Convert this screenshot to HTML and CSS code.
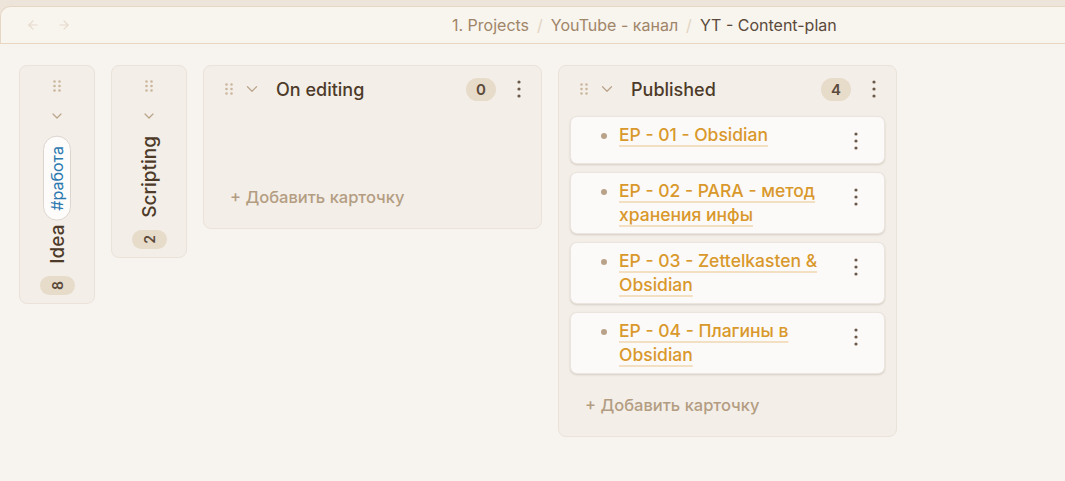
FILE: index.html
```html
<!DOCTYPE html>
<html lang="ru">
<head>
<meta charset="utf-8">
<title>YT - Content-plan</title>
<link rel="stylesheet" href="styles.css">
</head>
<body>
<div class="topstrip"></div>
<header class="viewheader">
  <div class="nav">
    <svg class="navbtn" width="14" height="14" viewBox="0 0 24 24" fill="none" stroke="currentColor" stroke-width="2" stroke-linecap="round" stroke-linejoin="round"><path d="M19 12H5"/><path d="M12 19l-7-7 7-7"/></svg>
    <svg class="navbtn" width="14" height="14" viewBox="0 0 24 24" fill="none" stroke="currentColor" stroke-width="2" stroke-linecap="round" stroke-linejoin="round"><path d="M5 12h14"/><path d="M12 5l7 7-7 7"/></svg>
  </div>
  <div class="crumbs">
    <span class="crumb">1. Projects</span><span class="sep">/</span><span class="crumb">YouTube - канал</span><span class="sep">/</span><span class="crumb current">YT - Content-plan</span>
  </div>
</header>

<main class="board">
  <section class="lane collapsed lane-idea">
    <svg class="handle" width="8" height="12" viewBox="0 0 8 12"><g fill="currentColor"><circle cx="1.5" cy="1.5" r="1.3"/><circle cx="6.5" cy="1.5" r="1.3"/><circle cx="1.5" cy="6" r="1.3"/><circle cx="6.5" cy="6" r="1.3"/><circle cx="1.5" cy="10.5" r="1.3"/><circle cx="6.5" cy="10.5" r="1.3"/></g></svg>
    <svg class="chev" width="16" height="16" viewBox="0 0 24 24" fill="none" stroke="currentColor" stroke-width="1.8" stroke-linecap="round" stroke-linejoin="round"><path d="M6 9l6 6 6-6"/></svg>
    <div class="vtitle"><span class="vlabel">Idea</span><span class="tag">#работа</span></div>
    <div class="vcount"><span>8</span></div>
  </section>

  <section class="lane collapsed">
    <svg class="handle" width="8" height="12" viewBox="0 0 8 12"><g fill="currentColor"><circle cx="1.5" cy="1.5" r="1.3"/><circle cx="6.5" cy="1.5" r="1.3"/><circle cx="1.5" cy="6" r="1.3"/><circle cx="6.5" cy="6" r="1.3"/><circle cx="1.5" cy="10.5" r="1.3"/><circle cx="6.5" cy="10.5" r="1.3"/></g></svg>
    <svg class="chev" width="16" height="16" viewBox="0 0 24 24" fill="none" stroke="currentColor" stroke-width="1.8" stroke-linecap="round" stroke-linejoin="round"><path d="M6 9l6 6 6-6"/></svg>
    <div class="vtitle"><span class="vlabel">Scripting</span></div>
    <div class="vcount"><span>2</span></div>
  </section>

  <section class="lane expanded">
    <div class="lane-head">
      <svg class="handle" width="8" height="12" viewBox="0 0 8 12"><g fill="currentColor"><circle cx="1.5" cy="1.5" r="1.3"/><circle cx="6.5" cy="1.5" r="1.3"/><circle cx="1.5" cy="6" r="1.3"/><circle cx="6.5" cy="6" r="1.3"/><circle cx="1.5" cy="10.5" r="1.3"/><circle cx="6.5" cy="10.5" r="1.3"/></g></svg>
      <svg class="chev" width="18" height="18" viewBox="0 0 24 24" fill="none" stroke="currentColor" stroke-width="1.6" stroke-linecap="round" stroke-linejoin="round"><path d="M6 9l6 6 6-6"/></svg>
      <h2 class="lane-title">On editing</h2>
      <span class="count">0</span>
      <svg class="more" width="4" height="18" viewBox="0 0 4 18"><g fill="currentColor"><circle cx="2" cy="2" r="1.6"/><circle cx="2" cy="9" r="1.6"/><circle cx="2" cy="16" r="1.6"/></g></svg>
    </div>
    <div class="items empty"></div>
    <button class="add">+ Добавить карточку</button>
  </section>

  <section class="lane expanded">
    <div class="lane-head">
      <svg class="handle" width="8" height="12" viewBox="0 0 8 12"><g fill="currentColor"><circle cx="1.5" cy="1.5" r="1.3"/><circle cx="6.5" cy="1.5" r="1.3"/><circle cx="1.5" cy="6" r="1.3"/><circle cx="6.5" cy="6" r="1.3"/><circle cx="1.5" cy="10.5" r="1.3"/><circle cx="6.5" cy="10.5" r="1.3"/></g></svg>
      <svg class="chev" width="18" height="18" viewBox="0 0 24 24" fill="none" stroke="currentColor" stroke-width="1.6" stroke-linecap="round" stroke-linejoin="round"><path d="M6 9l6 6 6-6"/></svg>
      <h2 class="lane-title">Published</h2>
      <span class="count">4</span>
      <svg class="more" width="4" height="18" viewBox="0 0 4 18"><g fill="currentColor"><circle cx="2" cy="2" r="1.6"/><circle cx="2" cy="9" r="1.6"/><circle cx="2" cy="16" r="1.6"/></g></svg>
    </div>
    <div class="items">
      <article class="card">
        <ul class="card-text"><li><a class="link">EP - 01 - Obsidian</a></li></ul>
        <svg class="more card-more" width="4" height="18" viewBox="0 0 4 18"><g fill="currentColor"><circle cx="2" cy="2" r="1.6"/><circle cx="2" cy="9" r="1.6"/><circle cx="2" cy="16" r="1.6"/></g></svg>
      </article>
      <article class="card">
        <ul class="card-text"><li><a class="link">EP - 02 - PARA - метод хранения инфы</a></li></ul>
        <svg class="more card-more" width="4" height="18" viewBox="0 0 4 18"><g fill="currentColor"><circle cx="2" cy="2" r="1.6"/><circle cx="2" cy="9" r="1.6"/><circle cx="2" cy="16" r="1.6"/></g></svg>
      </article>
      <article class="card">
        <ul class="card-text"><li><a class="link">EP - 03 - Zettelkasten &amp; Obsidian</a></li></ul>
        <svg class="more card-more" width="4" height="18" viewBox="0 0 4 18"><g fill="currentColor"><circle cx="2" cy="2" r="1.6"/><circle cx="2" cy="9" r="1.6"/><circle cx="2" cy="16" r="1.6"/></g></svg>
      </article>
      <article class="card">
        <ul class="card-text"><li><a class="link">EP - 04 - Плагины в Obsidian</a></li></ul>
        <svg class="more card-more" width="4" height="18" viewBox="0 0 4 18"><g fill="currentColor"><circle cx="2" cy="2" r="1.6"/><circle cx="2" cy="9" r="1.6"/><circle cx="2" cy="16" r="1.6"/></g></svg>
      </article>
    </div>
    <button class="add">+ Добавить карточку</button>
  </section>
</main>
</body>
</html>
```

FILE: styles.css
```css
* { box-sizing: border-box; }
html, body { margin: 0; padding: 0; }
body {
  background: #ede4da;
  font-family: Inter, "Noto Sans", sans-serif;
  color: #4d3a28;
  height: 481px;
  overflow: hidden;
}
.topstrip {
  height: 6px;
  background: #ede4da;
}
.viewheader {
  height: 38px;
  background: #f8f4ee;
  border-top: 1px solid #e6d7c5;
  border-left: 1px solid #e6d7c5;
  border-bottom: 1px solid #e8d6c0;
  border-top-left-radius: 10px;
  display: flex;
  align-items: center;
}
.nav {
  display: flex;
  gap: 17px;
  padding-left: 25px;
  color: #e6dacb;
}
.crumbs {
  margin-left: 381px;
  font-size: 16px;
  display: flex;
  align-items: center;
  color: #a08568;
}
.sep {
  color: #e2d4c3;
  margin: 0 8px;
}
.crumb.current { color: #5b4a3b; }

.board {
  background: #f7f3ee;
  height: 437px;
  padding: 21px 19px;
  display: flex;
  align-items: flex-start;
  gap: 16px;
}
.lane {
  background: #f3eee8;
  border: 1px solid #ebe3da;
  border-radius: 8px;
}
.handle { color: #cbb79e; display: block; }
.chev { color: #b9a48a; display: block; }

.collapsed {
  width: 76px;
  display: flex;
  flex-direction: column;
  align-items: center;
  padding: 14px 0 8px;
}
.collapsed .chev { margin-top: 16px; }
.vtitle {
  writing-mode: vertical-rl;
  transform: rotate(180deg);
  display: flex;
  align-items: center;
  gap: 4px;
  margin-top: 12px;
  font-size: 19px;
  font-weight: 500;
  color: #4d3a28;
}
.tag {
  font-size: 16px;
  font-weight: 400;
  color: #2c79b0;
  background: #fdfcfb;
  border: 1px solid #ddd6ce;
  border-radius: 14px;
  padding: 9px 3px;
}
.vcount {
  margin-top: 12px;
  width: 35px;
  height: 19px;
  border-radius: 10px;
  background: #e7dbca;
  display: flex;
  align-items: center;
  justify-content: center;
  font-size: 14px;
  font-weight: 600;
  color: #5b4a3b;
}
.vcount span { transform: rotate(-90deg); display: block; }

.expanded {
  width: 339px;
  padding: 0 11px 20px;
}
.lane-head {
  height: 46px;
  margin-bottom: 4px;
  display: flex;
  align-items: center;
  padding-left: 10px;
  padding-right: 9px;
}
.lane-head .chev { margin-left: 10px; }
.lane-title {
  margin: 0 0 0 15px;
  font-size: 18px;
  font-weight: 500;
  color: #4d3a28;
  flex: 1;
}
.count {
  min-width: 30px;
  height: 23px;
  border-radius: 12px;
  background: #e7dbca;
  color: #5b4a3b;
  font-size: 15px;
  font-weight: 600;
  display: flex;
  align-items: center;
  justify-content: center;
  margin-right: 21px;
}
.more { color: #6b5a4a; display: block; }

.items {
  display: flex;
  flex-direction: column;
  gap: 8px;
}
.items.empty { min-height: 50px; }
.card {
  background: #fcfaf8;
  border: 1px solid #ebe5de;
  border-radius: 7px;
  box-shadow: 0 1px 2px rgba(80, 60, 40, 0.18);
  display: flex;
  align-items: flex-start;
  padding: 6px 26px 6px 0;
  min-height: 48px;
}
.card-text {
  flex: 1;
  margin: 0;
  padding-left: 48px;
  font-size: 17.5px;
  font-weight: 500;
  line-height: 24px;
  color: #b9a28a;
}
.card-text li::marker { color: #b9a28a; }
.link {
  color: #d9982b;
  text-decoration: underline;
  text-decoration-color: #f3e0c2;
  text-decoration-thickness: 2px;
  text-underline-offset: 4px;
}
.card-more { margin-top: 9px; margin-left: 16px; flex: none; }

.add {
  display: block;
  margin-top: 20px;
  padding: 0 0 0 15px;
  height: 22px;
  border: 0;
  background: none;
  font-family: inherit;
  font-size: 16.5px;
  font-weight: 500;
  color: #b39d82;
  cursor: pointer;
}
```
